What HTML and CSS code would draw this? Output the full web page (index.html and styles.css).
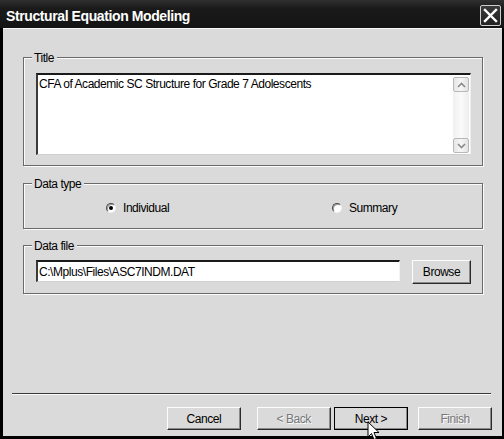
FILE: index.html
```html
<!DOCTYPE html>
<html>
<head>
<meta charset="utf-8">
<link rel="stylesheet" href="styles.css">
</head>
<body>
<div class="window">
  <div class="titlebar">
    <span class="title">Structural Equation Modeling</span>
    <span class="close">
      <svg width="15" height="15" viewBox="0 0 15 15"><path d="M2 2 L13 13 M13 2 L2 13" stroke="#fff" stroke-width="2.4" stroke-linecap="square"/></svg>
    </span>
  </div>
  <div class="content">
    <div class="group g-title">
      <div class="legend">Title</div>
      <div class="memo">
        <div class="memo-text">CFA of Academic SC Structure for Grade 7 Adolescents</div>
        <div class="vscroll">
          <div class="sbtn"><svg width="9" height="6" viewBox="0 0 9 6"><path d="M1 5 L4.5 1.5 L8 5" fill="none" stroke="#8a8a8a" stroke-width="1.6"/></svg></div>
          <div class="strack"></div>
          <div class="sbtn"><svg width="9" height="6" viewBox="0 0 9 6"><path d="M1 1 L4.5 4.5 L8 1" fill="none" stroke="#8a8a8a" stroke-width="1.6"/></svg></div>
        </div>
      </div>
    </div>
    <div class="group g-type">
      <div class="legend">Data type</div>
      <div class="radios">
        <label class="radio-item"><span class="radio checked"></span><span>Individual</span></label>
        <label class="radio-item"><span class="radio"></span><span>Summary</span></label>
      </div>
    </div>
    <div class="group g-file">
      <div class="legend">Data file</div>
      <div class="filerow">
        <div class="field">C:\Mplus\Files\ASC7INDM.DAT</div>
        <div class="btn browse">Browse</div>
      </div>
    </div>
    <div class="separator"></div>
    <div class="buttons">
      <div class="btn w74">Cancel</div>
      <div class="btn w74 disabled back">&lt; Back</div>
      <div class="btn default">Next &gt;</div>
      <div class="btn w74 disabled finish">Finish</div>
    </div>
  </div>
  <svg class="cursor" width="14" height="20" viewBox="0 0 14 20"><path d="M1 1 L1 16 L4.5 12.5 L7 18.5 L9.5 17.5 L7 11.5 L12 11.5 Z" fill="#fff" stroke="#000" stroke-width="1"/></svg>
</div>
</body>
</html>
```
FILE: styles.css
```css
html, body {
  margin: 0;
  padding: 0;
  background: #000;
}
body {
  font-family: "Liberation Sans", Arial, sans-serif;
  font-size: 12px;
  letter-spacing: -0.45px;
  color: #000;
}
.window {
  position: relative;
  width: 504px;
  height: 439px;
  background: #000;
  display: flex;
  flex-direction: column;
  overflow: hidden;
}
.titlebar {
  height: 28px;
  flex: none;
  display: flex;
  align-items: center;
  justify-content: space-between;
  background: linear-gradient(#303030, #1a1a1a 30%, #141414);
  padding: 0 3px 0 6px;
}
.title {
  color: #fff;
  font-weight: bold;
  font-size: 14px;
  letter-spacing: -0.4px;
  padding-top: 3px;
}
.close {
  width: 19px;
  height: 19px;
  border: 1px solid #cfcfcf;
  border-radius: 2px;
  background: linear-gradient(#3a3a3a, #222);
  display: flex;
  align-items: center;
  justify-content: center;
  margin-top: 3px;
}
.content {
  flex: 1;
  margin: 0 2px 3px 3px;
  background: #dadada;
  border-top: 1px solid #f6f6f6;
  display: flex;
  flex-direction: column;
  padding: 28px 10px 6px 20px;
}
.group {
  box-sizing: border-box;
  width: 460px;
  border: 1px solid #6a6a6a;
  box-shadow: inset 1px 1px 0 #fbfbfb, 1px 1px 0 #fbfbfb;
  padding: 0 11px 10px 12px;
}
.legend {
  display: table;
  height: 14px;
  line-height: 14px;
  margin: -7px 0 0 -4px;
  padding: 0 3px 0 2px;
  background: #dadada;
}
.g-title .legend { margin-bottom: 8px; }
.g-title { padding-bottom: 10px; }
.memo {
  height: 79px;
  background: #fff;
  border-top: 2px solid #1a1a1a;
  border-left: 2px solid #3a3a3a;
  border-right: 1px solid #efefef;
  border-bottom: 1px solid #cfcfcf;
  display: flex;
}
.memo-text {
  flex: 1;
  padding: 2px 0 0 1px;
  line-height: 14px;
}
.vscroll {
  width: 16px;
  margin: 2px 1px 1px 0;
  display: flex;
  flex-direction: column;
}
.sbtn {
  height: 15px;
  border: 1px solid #b8b8b8;
  border-radius: 2px;
  background: linear-gradient(90deg, #e6e6e6, #f6f6f6 50%, #e2e2e2);
  display: flex;
  align-items: center;
  justify-content: center;
  box-sizing: border-box;
}
.strack {
  flex: 1;
  background: linear-gradient(90deg, #f0f0f0, #fafafa 50%, #eeeeee);
}
.g-type {
  margin-top: 17px;
  padding-bottom: 12px;
}
.radios {
  display: grid;
  grid-template-columns: 226px auto;
  padding-left: 70px;
  margin-top: 9px;
  height: 16px;
  align-items: center;
}
.radio-item {
  display: flex;
  align-items: center;
  gap: 7px;
}
.radio {
  width: 8px;
  height: 8px;
  border-radius: 50%;
  background: #fff;
  border: 1px solid;
  border-color: #4a4a4a #f0f0f0 #f0f0f0 #4a4a4a;
  box-shadow: inset 1px 1px 0 #999;
  display: flex;
  align-items: center;
  justify-content: center;
}
.radio.checked::after {
  content: "";
  width: 4px;
  height: 4px;
  border-radius: 50%;
  background: #000;
}
.g-file {
  margin-top: 16px;
  padding-bottom: 9px;
}
.g-file .legend { margin-bottom: 7px; }
.filerow {
  display: flex;
  align-items: flex-start;
  gap: 12px;
}
.field {
  width: 360px;
  height: 19px;
  line-height: 20px;
  background: #fff;
  border-top: 2px solid #1a1a1a;
  border-left: 2px solid #3a3a3a;
  border-right: 1px solid #f4f4f4;
  border-bottom: 1px solid #d0d0d0;
  padding-left: 1px;
}
.btn {
  box-sizing: border-box;
  height: 23px;
  background: #dadada;
  border: 1px solid;
  border-color: #fdfdfd #2a2a2a #2a2a2a #fdfdfd;
  box-shadow: inset -1px -1px 0 #8a8a8a;
  display: flex;
  align-items: center;
  justify-content: center;
}
.browse {
  width: 59px;
  height: 24px;
}
.separator {
  margin-top: auto;
  margin-left: -11px;
  width: 479px;
  height: 1px;
  background: #3a3a3a;
  border-bottom: 1px solid #fafafa;
}
.buttons {
  margin-top: 12px;
  display: flex;
  padding-left: 144px;
}
.w74 { width: 74px; }
.back { margin-left: 16px; }
.default {
  width: 75px;
  margin-left: 3px;
  outline: 1px solid #000;
  outline-offset: -1px;
  border-color: #fdfdfd #000 #000 #fdfdfd;
}
.finish { margin-left: 10px; }
.disabled {
  color: #777;
  text-shadow: 1px 1px 0 #fbfbfb;
}
.cursor {
  position: absolute;
  left: 367px;
  top: 421px;
}
```
